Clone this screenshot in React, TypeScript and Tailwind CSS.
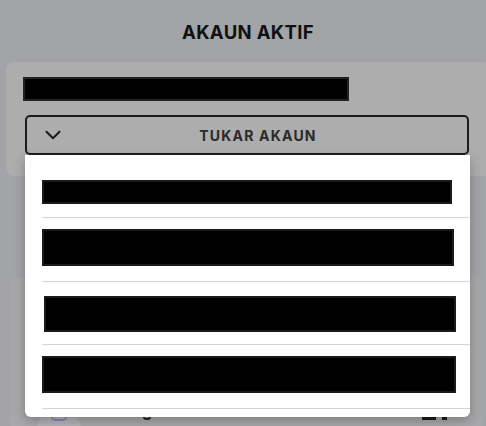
import React from "react";
import { ChevronDown } from "lucide-react";

const items = [
  { box: "w-[410px] h-[24px]", pad: "pt-[12px] pb-[13px]" },
  { box: "w-[412px] h-[37px]", pad: "pt-[11px] pb-[15px]" },
  { box: "w-[412px] h-[36px] ml-[2px]", pad: "pt-[14px] pb-[12px]" },
  { box: "w-[414px] h-[37px]", pad: "pt-[11px] pb-[15px]" },
];

export default function App() {
  return (
    <div
      className="relative w-[486px] h-[426px] overflow-hidden bg-[#a3a4a8] flex flex-col"
      style={{ fontFamily: "Inter, 'Liberation Sans', sans-serif" }}
    >
      <header className="shrink-0 h-[62px] pt-[4px] pl-[10px] flex items-center justify-center">
        <h1 className="text-[18.5px] font-bold text-[#111] tracking-[0.35px]">AKAUN AKTIF</h1>
      </header>

      <section className="shrink-0 ml-[6px] w-[486px] rounded-lg bg-[#adadad] pt-[15px] pb-[21px] flex flex-col">
        <div className="ml-[17px] w-[326px] h-[24px] bg-black border-2 border-[#222]" />
        <button className="mt-[14px] ml-[19px] w-[444px] h-[40px] rounded-[5px] border-2 border-[#1c1c1c] flex items-center pl-[13px]">
          <ChevronDown size={26} strokeWidth={1.9} className="text-[#1c1c1c]" />
          <span className="flex-1 text-center pr-[17px] text-[14px] font-bold tracking-[1.2px] text-[#2a2a2a]">
            TUKAR AKAUN
          </span>
        </button>
      </section>

      <section className="shrink-0 mt-[101px] ml-[11px] w-[470px] h-[200px] rounded-t-lg bg-[#a8a8aa] pt-[131px]">
        <div className="flex items-start pl-[26px] pr-[34px]">
          <div className="w-[44px] h-[30px] rounded-t-full bg-[#b3b3b8] flex items-start justify-center pt-[7px]">
            <div className="w-[18px] h-[6px] rounded-b-full border-2 border-t-0 border-[#8d82b8]" />
          </div>
          <div className="ml-[62px] mt-[5px] w-[8px] h-[7px] rounded-full border-2 border-[#222]" />
          <div className="flex-1" />
          <div className="flex items-start gap-[6px] mt-[9px]">
            <div className="w-[14px] h-[3px] bg-[#1a1a1a]" />
            <div className="w-[5px] h-[3px] bg-[#1a1a1a]" />
          </div>
        </div>
      </section>

      <div className="absolute left-[25px] top-[155px] w-[445px] h-[262px] bg-white rounded-b-md shadow-[0_4px_12px_rgba(0,0,0,0.25)] pt-[13px] flex flex-col">
        {items.map((it, i) => (
          <div key={i} className={`ml-[17px] border-b border-[#d4d4d4] ${it.pad}`}>
            <div className={`${it.box} bg-black border-2 border-[#1b1b1b]`} />
          </div>
        ))}
      </div>
    </div>
  );
}
